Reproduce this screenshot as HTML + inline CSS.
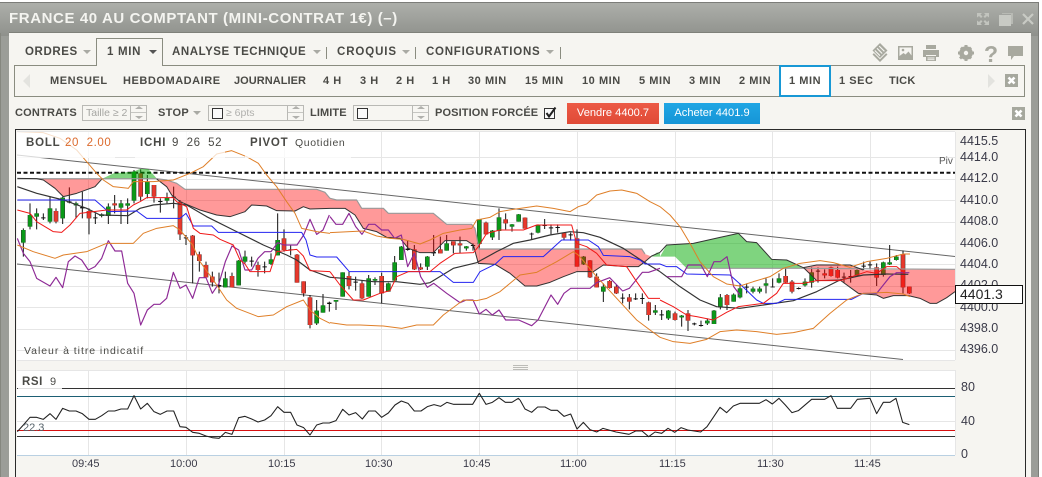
<!DOCTYPE html>
<html><head><meta charset="utf-8"><style>
html,body{margin:0;padding:0}
body{width:1042px;height:477px;overflow:hidden;position:relative;background:#fff;font-family:"Liberation Sans",sans-serif}
.a{position:absolute}
.t{position:absolute;white-space:nowrap;line-height:14px;font-weight:bold;font-size:11px;letter-spacing:.55px;color:#4a4a46}
.n{position:absolute;white-space:nowrap;line-height:14px;font-size:12.5px;color:#3a3a48}
.c{position:absolute;width:0;height:0;border-left:4px solid transparent;border-right:4px solid transparent;border-top:4px solid #a9aaa4}
.i{position:absolute;box-sizing:border-box;height:16px;border:1px solid #b9b9b5;background:#f7f6f2}
.s{position:absolute;top:0;bottom:0;right:0;width:15px;border-left:1px solid #b9b9b5}
.cb{position:absolute;box-sizing:border-box;width:11px;height:11px;border:1px solid #333;background:#fafafa}
</style></head><body>
<div class="a" style="left:0;top:2px;width:1039px;height:475px;background:linear-gradient(#adafaa 0,#8f918c 33px,#9b9d98 33px);border-top:1px solid #7c7d79;border-right:1px solid #7c7d79;box-sizing:border-box"></div>
<div class="a" style="left:0;top:33px;width:1px;height:444px;background:#85877f"></div>
<div class="t" style="left:9px;top:11px;font-size:15px;line-height:15px;letter-spacing:.6px;color:#f4f4f0">FRANCE 40 AU COMPTANT (MINI-CONTRAT 1€) (–)</div>
<svg class="a" style="left:974px;top:10px" width="62" height="18" fill="#c2c4be">
<path d="M3 3h5l-1.500 1.500 2 2-1.500 1.500-2-2L3 7.500zM15 3h-5l1.500 1.500-2 2 1.500 1.500 2-2L15 7.500zM3 15h5l-1.500-1.500 2-2-1.500-1.500-2 2L3 10.500zM15 15h-5l1.500-1.500-2-2 1.500-1.500 2 2L15 10.500z"/>
<path d="M28 3h11v11h-2V4H28z" fill="#b8bab4"/><rect x="25" y="5" width="12" height="11" fill="#c8cac4"/>
<path d="M49 4l10 10M59 4L49 14" stroke="#c8cac4" stroke-width="2.200" fill="none"/></svg>
<div class="a" style="left:9px;top:33px;width:1022px;height:444px;background:#f6f5f1;box-shadow:0 -1px 0 #7f817a"></div>

<div class="a" style="left:14px;top:65px;width:1011px;height:32px;box-sizing:border-box;border:1px solid #8a8c80"></div>
<div class="a" style="left:96px;top:38px;width:67px;height:28px;box-sizing:border-box;border:1px solid #8a8c80;border-bottom:none;background:#f6f5f1"></div>
<div class="t" style="left:25px;top:45px;font-size:11.500px;letter-spacing:.6px">ORDRES</div><div class="c" style="left:83px;top:50px"></div>
<div class="t" style="left:107px;top:45px;font-size:11.500px;letter-spacing:.7px">1 MIN</div><div class="c" style="left:149px;top:50px;border-top-color:#555"></div>
<div class="t" style="left:172px;top:45px;font-size:11.500px;letter-spacing:.55px">ANALYSE TECHNIQUE</div><div class="c" style="left:313px;top:50px"></div>
<div class="a" style="left:326px;top:47px;width:1px;height:12px;background:#8a8c80"></div>
<div class="t" style="left:337px;top:45px;font-size:11.500px;letter-spacing:.9px">CROQUIS</div><div class="c" style="left:402px;top:50px"></div>
<div class="a" style="left:415px;top:47px;width:1px;height:12px;background:#8a8c80"></div>
<div class="t" style="left:426px;top:45px;font-size:11.500px;letter-spacing:.75px">CONFIGURATIONS</div><div class="c" style="left:546px;top:50px"></div>
<div class="a" style="left:560px;top:47px;width:1px;height:12px;background:#8a8c80"></div>
<svg class="a" style="left:870px;top:42px" width="156" height="22" fill="#a8a99f">
<path d="M10 1l7.500 7.500L10 16 2.500 8.500z"/><path d="M4.800 8.500L10 13.700M7 6.300L12.200 11.500M9.200 4.100L14.400 9.300" stroke="#f6f5f1" stroke-width="1.100" fill="none"/><path d="M2.500 12.500l7.500 7.500 7.500-7.500-1.400-1.400L10 17.200 3.900 11.100z"/>
<path d="M28 4h15v14H28z"/><path d="M29.500 5.500h12v8l-3-4-3 3-2-1.500-4 3z" fill="#f6f5f1"/><circle cx="33" cy="8" r="1.300" fill="#a8a99f"/>
<path d="M56 3h10v4h-10zM53 8h16v7h-3v-2H56v2h-3zM56 14h10v5H56z"/><path d="M57.500 15.500h7v1h-7zM57.500 17.300h7v.8h-7z" fill="#f6f5f1"/>
<circle cx="96" cy="11" r="5" fill="none" stroke="#a8a99f" stroke-width="3.500"/><path d="M96 11m-1.500-8h3v16h-3zM88 9.500h16v3H88zM90 6.500l2-2 10 11-2 2zM100 4.500l2 2-11 11-2-2z"/><circle cx="96" cy="11" r="2.200" fill="#f6f5f1"/>
<text x="114" y="20" font-family="Liberation Sans" font-weight="bold" font-size="23" fill="#a8a99f">?</text>
<path d="M138 4h15v10h-9l-3 4v-4h-3z"/></svg>

<svg class="a" style="left:22px;top:73px" width="10" height="16"><path d="M8 1v14L1 8z" fill="#e3e3df"/></svg>
<svg class="a" style="left:986px;top:73px" width="10" height="16"><path d="M2 1v14l7-7z" fill="#e3e3df"/></svg>
<div class="a" style="left:779px;top:65px;width:52px;height:32px;box-sizing:border-box;border:2px solid #1898d5;background:#fff"></div>
<div class="t" style="left:50px;top:74px">MENSUEL</div>
<div class="t" style="left:123px;top:74px">HEBDOMADAIRE</div>
<div class="t" style="left:234px;top:74px;letter-spacing:.05px">JOURNALIER</div>
<div class="t" style="left:323px;top:74px">4 H</div><div class="t" style="left:360px;top:74px">3 H</div>
<div class="t" style="left:396px;top:74px">2 H</div><div class="t" style="left:432px;top:74px">1 H</div>
<div class="t" style="left:468px;top:74px">30 MIN</div><div class="t" style="left:525px;top:74px">15 MIN</div>
<div class="t" style="left:582px;top:74px">10 MIN</div><div class="t" style="left:639px;top:74px">5 MIN</div>
<div class="t" style="left:689px;top:74px">3 MIN</div><div class="t" style="left:739px;top:74px">2 MIN</div>
<div class="t" style="left:789px;top:74px">1 MIN</div><div class="t" style="left:839px;top:74px">1 SEC</div>
<div class="t" style="left:889px;top:74px;letter-spacing:.2px">TICK</div>
<svg class="a" style="left:1005px;top:74px" width="13" height="13"><rect width="13" height="13" fill="#a6a89e"/><path d="M3.500 3.500l6 6M9.500 3.500l-6 6" stroke="#fff" stroke-width="2.600"/></svg>
<svg class="a" style="left:1012px;top:107px" width="13" height="13"><rect width="13" height="13" fill="#a6a89e"/><path d="M3.500 3.500l6 6M9.500 3.500l-6 6" stroke="#fff" stroke-width="2.600"/></svg>

<div class="t" style="left:15px;top:106px;letter-spacing:.2px">CONTRATS</div>
<div class="i" style="left:82px;top:105px;width:65px"><div class="s"></div><span style="position:absolute;left:3px;top:0;font-size:10.500px;line-height:14px;color:#a5a5a2">Taille ≥ 2</span></div>
<div class="t" style="left:158px;top:106px;letter-spacing:.3px">STOP</div><div class="c" style="left:193px;top:111px"></div>
<div class="i" style="left:208px;top:105px;width:96px"><div class="s"></div><div class="cb" style="left:3px;top:2px"></div><span style="position:absolute;left:17px;top:0;font-size:10.500px;line-height:14px;color:#b0b0ad">≥ 6pts</span></div>
<div class="t" style="left:310px;top:106px;letter-spacing:.1px">LIMITE</div>
<div class="i" style="left:353px;top:105px;width:76px"><div class="s"></div><div class="cb" style="left:3px;top:2px"></div></div>
<svg class="a" style="left:0;top:105px" width="440" height="16" fill="#b0b0ac"><path d="M135 4l4-3 4 3zM135 11l4 3 4-3zM292 4l4-3 4 3zM292 11l4 3 4-3zM417 4l4-3 4 3zM417 11l4 3 4-3z"/><path d="M131 7.500h15M288 7.500h15M413 7.500h15" stroke="#c6c6c2"/></svg>
<div class="t" style="left:435px;top:106px;letter-spacing:.12px">POSITION FORCÉE</div>
<svg class="a" style="left:544px;top:106px" width="14" height="14"><rect x=".5" y="2.500" width="10" height="10" fill="#fafafa" stroke="#333"/><path d="M2.500 7l2.500 3.500L11.500 1.500" fill="none" stroke="#222" stroke-width="2"/></svg>
<div class="a" style="left:567px;top:103px;width:92px;height:21px;background:linear-gradient(#ec5a46,#e04a36);color:#fff;font-size:11.100px;line-height:21px;text-align:center">Vendre 4400.7</div>
<div class="a" style="left:664px;top:103px;width:96px;height:21px;background:linear-gradient(#20a6e4,#1695d6);color:#fff;font-size:11.100px;line-height:21px;text-align:center">Acheter 4401.9</div>

<div class="a" style="left:15px;top:129px;width:1011px;height:348px;box-sizing:border-box;border:1px solid #2a2a2a;border-top-width:1px;border-bottom:none;background:#f6f5f1"></div>

<svg class="a" style="left:0;top:0" width="1042" height="477">
<defs>
<clipPath id="cc"><rect x="17" y="132" width="938" height="228"/></clipPath>
<path id="g3" d="M70 300V338M90 255V290M110 250V260M150 235V275M188 203V265M228 220V226M305 253V258M325 230V258M363 220V233M383 220V227M402 125V212M442 155V192M501 203V212M676 445V472M716 392V466M735 380V395M813 388V402M833 330V376M950 542V580M969 526V548"/>
<path id="r3" d="M168 243V275M267 243V265M344 220V226M422 130V200M462 165V200M540 215V313M578 317V376M598 373V393M618 405V442M637 440V457M696 438V472M774 405V420M852 325V360M891 374V458M911 454V490M930 502V585"/>
<path id="g4" d="M18 510V515M38 427V500M116 445V500M135 447V452M175 460V485M194 397V452M214 350V390M292 380V410M350 340V362M409 349V355M448 268V342M487 302V322M507 262V303M546 283V290M566 253V275M624 285V308M761 380V403M820 470V485M976 541V548"/>
<path id="r4" d="M57 438V468M96 460V505M155 438V490M253 358V418M272 412V418M331 358V370M370 334V346M390 340V346M468 278V313M527 268V280M585 263V296M702 309V323M741 325V410M780 391V442M800 440V472M839 453V474M859 470V490M898 502V515M956 517V555"/>
<path id="g5" d="M25 542V565M65 557V562M142 572V580M162 542V582M181 502V532M221 494V515M240 475V502M279 476V485M299 476V485M318 460V467M357 445V458M435 455V466M455 427V458M591 420V436M670 397V435M689 397V403M709 380V390"/>
<path id="r5" d="M45 550V570M84 550V572M201 495V525M377 438V458M396 455V485M494 430V436M513 412V438M533 420V443M650 412V443M729 372V472M748 470V490"/>
</defs>
<rect x="17" y="132" width="938" height="228" fill="#fff"/>
<rect x="17" y="370" width="938" height="85" fill="#fff"/>
<path d="M17 131.500H955M17 157.500H955M17 179.500H955M17 200.500H955M17 222.500H955M17 243.500H955M17 264.500H955M17 286.500H955M17 307.500H955M17 329.500H955M17 350.500H955M17 360.500H955M17 370.500H955M17 421.500H955M88.500 132V360M186.500 132V360M284.500 132V360M381.500 132V360M479.500 132V360M577.500 132V360M675.500 132V360M772.500 132V360M870.500 132V360M88.500 370V455M186.500 370V455M284.500 370V455M381.500 370V455M479.500 370V455M577.500 370V455M675.500 370V455M772.500 370V455M870.500 370V455M955.500 132V360M955.500 370V455" stroke="#e6e6e6" fill="none"/>
<path d="M17 455.500H955" stroke="#b9d0e2"/>
<path d="M17 388.500H955" stroke="#333"/><path d="M17 396.500H955" stroke="#1d5f74"/><path d="M17 430.500H955" stroke="#d81010"/><path d="M17 436.500H955" stroke="#333"/>

<g clip-path="url(#cc)">
<path d="M17 155L955 256.500M17 264L903 359.500" stroke="#666" stroke-width="1" fill="none"/>
<path d="M17 172.700H955" stroke="#111" stroke-width="2" stroke-dasharray="4 2.500"/>

<g transform="translate(0,130) scale(.33333)" fill="none">
<path d="M70 295V380M90 220V298M110 235V298M130 250V270M150 200V280M168 235V280M188 200V282M208 172V220M228 215V265M247 185V265M267 235V313M286 250V282M305 250V262M325 220V282M344 195V250M363 210V282M383 205V282M402 120V220M422 118V212M442 135V205M462 165V218M481 205V248M501 188V220M521 170V235M540 210V330M558 315V345M578 315V460M598 365V425M618 395V442M637 425V470M657 428V490M676 425V472M696 428V472M716 390V466M735 362V400M755 380V410M774 395V440M794 395V430M813 370V405M833 250V376M852 298V365M872 345V376M891 372V458M911 454V500M930 495V595M950 510V585M969 492V548M988 515V545" stroke="#111" stroke-width="3"/>
<path d="M130 262V265M208 214V218M247 231V235M286 262V265M481 213V216M521 200V203M558 322V325M657 465V470M755 392V395M794 409V412M872 358V360M988 518V522" stroke="#111" stroke-width="13"/>
<use href="#g3" stroke="#333" stroke-width="14"/><use href="#r3" stroke="#333" stroke-width="14"/>
<use href="#g3" stroke="#0a9a18" stroke-width="11"/><use href="#r3" stroke="#e8382c" stroke-width="11"/>
</g>
<g transform="translate(330,130) scale(.33333)" fill="none">
<path d="M18 510V540M38 427V500M57 425V478M77 440V482M96 450V507M116 435V500M135 442V465M155 428V520M175 458V485M194 378V452M214 348V390M233 330V362M253 345V420M272 400V420M292 378V420M311 315V378M331 320V370M350 315V362M370 335V370M390 320V370M409 348V362M429 340V362M448 268V355M468 275V315M487 300V330M507 235V330M527 250V298M546 282V305M566 252V275M585 262V296M605 308V330M624 283V310M644 267V297M663 283V313M683 283V308M702 308V330M722 308V332M741 298V410M761 378V405M780 390V444M800 430V472M820 460V516M839 450V476M859 465V492M878 490V520M898 492V538M917 490V510M937 490V522M956 515V572M976 525V555" stroke="#111" stroke-width="3"/>
<path d="M77 455V458M233 356V360M311 366V370M429 345V348M605 311V313M644 285V288M663 292V295M683 291V294M722 313V316M878 503V506M917 505V508M937 504V507" stroke="#111" stroke-width="13"/>
<use href="#g4" stroke="#333" stroke-width="14"/><use href="#r4" stroke="#333" stroke-width="14"/>
<use href="#g4" stroke="#0a9a18" stroke-width="11"/><use href="#r4" stroke="#e8382c" stroke-width="11"/>
</g>
<g transform="translate(660,130) scale(.33333)" fill="none">
<path d="M5 540V570M25 540V570M45 545V572M65 555V590M84 540V603M103 578V586M123 572V590M142 565V585M162 540V582M181 492V538M201 492V540M221 490V515M240 460V505M260 460V490M279 470V490M299 470V490M318 445V490M338 445V472M357 430V460M377 412V460M396 450V490M416 472V478M435 445V470M455 412V473M474 412V458M494 418V445M513 410V440M533 410V445M552 428V458M572 420V458M591 418V438M611 395V420M630 395V418M650 400V468M670 395V440M689 345V405M709 375V392M729 362V490M748 470V492" stroke="#111" stroke-width="3"/>
<path d="M5 553V556M103 580V583M123 585V588M260 470V473M338 470V472M416 474V477M474 422V425M552 440V443M572 438V441M611 407V410M630 403V406" stroke="#111" stroke-width="13"/>
<use href="#g5" stroke="#333" stroke-width="14"/><use href="#r5" stroke="#333" stroke-width="14"/>
<use href="#g5" stroke="#0a9a18" stroke-width="11"/><use href="#r5" stroke="#e8382c" stroke-width="11"/>
</g>

<g transform="translate(0,130) scale(.33333)" stroke-linejoin="round">
<path d="M115 146L130 150 165 175 190 200 230 190 285 170 305 146z" fill="#ff0000" fill-opacity=".4"/>
<path d="M305 147L340 130 400 125 420 117 445 117 470 145z" fill="#00aa00" fill-opacity=".5"/>
<path d="M470 146L500 150 530 160 555 178 950 178 975 187 990 205 990 235 930 237 910 230 885 243 830 242 800 228 755 225 735 245 690 260 650 255 600 240 540 215 515 195 500 170z" fill="#ff0000" fill-opacity=".4"/>
</g>
<g transform="translate(330,130) scale(.33333)">
<path d="M0 205L20 210 80 210 95 235 160 235 175 250 310 250 350 283 425 283 435 295 447 357 935 358 945 372 965 380 945 395 925 410 890 410 820 405 790 425 740 425 700 440 660 457 620 468 585 468 540 430 495 403 445 400 430 345 410 332 345 332 310 368 270 368 235 355 210 325 170 322 140 305 100 295 75 255 45 235 0 235z" fill="#ff0000" fill-opacity=".4"/>
<path d="M965 380L980 368 990 367 990 380z" fill="#00aa00" fill-opacity=".5"/>
</g>
<g transform="translate(660,130) scale(.33333)">
<path d="M0 380L20 345 100 340 180 322 235 310 260 335 290 338 335 388 380 390 430 415 80 415 45 380z" fill="#00aa00" fill-opacity=".5"/>
<path d="M430 415L480 403 570 405 610 420 885 418 885 485 860 503 830 520 810 520 780 505 745 497 700 497 670 505 650 495 595 490 540 450 470 452z" fill="#ff0000" fill-opacity=".4"/>
</g>

<g fill="none" stroke-linejoin="round">
<g transform="translate(0,130) scale(.33333)">
<path d="M52 146H470L500 150 530 160 555 178H950L975 187 990 205" stroke="#999" stroke-width="3.500"/>
<path d="M52 145L110 146 130 150 165 175 190 200 230 190 285 170 305 148M470 147L500 170 515 195 540 215 600 240 650 255 690 260 735 245 755 225 800 228 830 242 885 243 910 230 930 237 990 235" stroke="#333" stroke-width="3"/>
<path d="M52 170L110 190 190 210 260 235 300 255 385 257 420 235 460 225 520 220 560 225 620 260 700 300 790 345 860 375 890 390 930 420 990 442" stroke="#333" stroke-width="3.500"/>
<path d="M52 325L70 370 90 395 110 445 150 468 168 442 188 473 205 395 225 378 245 390 265 420 285 410 305 385 325 332 345 363 365 363 383 460 402 490 422 585 442 540 462 523 480 523 500 505 520 427 540 475 558 465 578 505 598 443 618 443 637 490 657 460 676 395 696 348 716 360 735 420 755 420 774 385 794 365 813 365 833 338 852 345 891 345 911 315 930 268 950 313 969 300 988 255" stroke="#8e2a96" stroke-width="3.500"/>
<path d="M52 210H285L325 245 410 243 440 265H540L558 250 580 288H635L655 307H905L918 330 930 375 950 381H990" stroke="#2424f0" stroke-width="3"/>
<path d="M52 240L90 250 110 275 160 305 185 307 210 285 240 250 320 240H380L400 225 420 215 440 203H520L530 215 560 230 580 295 600 310 640 315 660 328 700 345 720 390 735 402 750 425H810L830 365 890 358 910 378 930 422 990 425" stroke="#f01818" stroke-width="3"/>
<path d="M50 5L130 8 180 25 230 60 260 95 290 130 310 150 340 170 385 175 400 155H460L520 150 570 130 610 110 650 72 695 62 740 80 775 100 800 135 830 170 860 215 885 250 905 295 950 305 990 310M52 345L100 365 165 385 190 375 260 365 320 340H400L430 310 470 295 520 287 540 300 578 345 600 395 640 450 680 510 710 535 775 560 820 555 860 530 910 510 930 540 960 565 990 580" stroke="#df7f28" stroke-width="3"/>
</g>
<g transform="translate(330,130) scale(.33333)">
<path d="M0 205L20 210H80L95 235H160L175 250H310L350 283H425L435 295 447 357H935L945 372M445 357" stroke="#999" stroke-width="3.500"/>
<path d="M0 235H45L75 255 100 295 140 305 170 322 210 325 235 355 270 368H310L345 332H410L430 345 445 400 495 403 540 430 585 468H620L660 457 700 440 740 425H790L820 405 890 410H925L945 395 965 378 990 367" stroke="#333" stroke-width="3"/>
<path d="M0 442L40 445 130 455H200L270 463 300 458 370 415 440 398 500 365 550 340 600 330 660 315 720 305 760 308 810 322 880 355 940 395 990 425" stroke="#333" stroke-width="3.500"/>
<path d="M0 260L18 283H38L57 250 77 290 96 313 116 283H135L155 300H175L194 325 214 315 233 410 253 370 272 440 292 472 311 460 350 490 390 518 409 510H429L448 552 468 538 487 555 507 540 527 570H566L605 587 624 570 663 495 683 523 702 490 722 475H780L800 458 839 443 878 483 898 475 937 427H956L990 415" stroke="#8e2a96" stroke-width="3.500"/>
<path d="M0 381H20L58 425H330L370 457H430L450 425 495 403 520 380H640L695 330H775L805 350 820 376 900 380 930 390 945 402H990" stroke="#2424f0" stroke-width="3"/>
<path d="M0 425L30 465 70 510H100L150 490 180 482 200 440 235 425H300L330 400 375 370 430 368 445 350 470 310 510 300H580L620 285H725L740 340 770 350 800 370 830 405 890 410 920 455 955 505H990" stroke="#f01818" stroke-width="3"/>
<path d="M0 308L60 305 100 303 140 318 180 325 220 328 270 342 300 330 340 310 390 300 425 295 440 270 480 262 510 245 550 238 620 228 670 235 720 245 745 230 770 222 800 195 840 183 875 180 920 190 960 215 990 230M0 578L50 585H90L160 588 215 595 260 585H310L340 555 400 510 440 512 470 505 510 485 570 435 620 427 680 395 730 365 745 375 775 410 800 440 860 505 920 570 960 600 990 622" stroke="#df7f28" stroke-width="3"/>
</g>
<g transform="translate(660,130) scale(.33333)">
<path d="M80 415H430L885 418" stroke="#999" stroke-width="3.500"/>
<path d="M0 367L20 345 100 340 180 322 235 310 260 335 290 338 335 388 380 390 430 413 470 405 570 405 610 420M430 412L470 452 540 450 595 490 650 495 670 505 700 497 745 497 780 505 810 520H830L860 503 885 485" stroke="#333" stroke-width="3"/>
<path d="M0 425L60 470 120 510 170 530 240 535 310 525 400 512 470 485 540 450 610 435 680 432 745 433" stroke="#333" stroke-width="3.500"/>
<path d="M0 402L20 410H50L80 432 210 435 240 462 290 510 310 520H350L375 508H575L610 490H650" stroke="#2424f0" stroke-width="3"/>
<path d="M20 440H65L84 405H123L142 440 162 395H181L201 380 221 470 240 495M650 490L670 465 690 440 710 428H748" stroke="#8e2a96" stroke-width="3.500"/>
<path d="M0 510L40 530 80 555 110 560 160 570 200 547 235 530 310 520 350 490 370 460H430L470 452H540L620 425 650 430 680 410H710L735 430" stroke="#f01818" stroke-width="3"/>
<path d="M0 230L30 255 60 290 90 340 120 395 160 440 200 462 240 468 280 455 330 440 370 415 420 400 480 392 520 398 570 412 620 395 680 385 730 372H750M0 622L40 635 90 640 140 628 180 605 230 600 290 605 350 613 400 608 460 595 510 550 560 510 610 490 680 487 730 492 750 500" stroke="#df7f28" stroke-width="3"/>
</g>
</g>
</g>

<g fill="none" stroke="#222" stroke-width="3.200" stroke-linejoin="round">
<path transform="translate(0,355) scale(.33333)" d="M52 230L70 210 90 187H110L130 193 150 176 168 193 188 160 208 168H228L247 176 267 193H286L305 182 325 168H344L363 162H383L402 122 422 162 442 145 462 170 481 178 501 168H521L540 215 558 217 578 232 598 235 618 243 637 248 657 250 676 232 696 238 716 188 735 184 755 192 774 201 794 195 813 182 833 155 852 172H872L891 210 911 218 930 240 950 210 969 204H988L1008 197 1028 163 1047 180 1067 173 1087 192 1106 168H1126L1145 187 1165 174 1185 150 1204 138 1224 145 1243 168H1263L1282 155 1302 149 1322 154 1341 142 1361 148H1418L1438 115 1458 148 1477 142 1497 128 1516 142H1536L1555 130 1560 135"/>
<path transform="translate(520,355) scale(.33333)" d="M0 135L15 162 35 172 53 156H75L93 166H112L132 184 152 177 171 222 190 202 210 224 230 231 249 220 288 231 327 238 347 228H366L386 245 405 231 425 235 444 220 464 232 483 218 503 225 542 231 561 215 580 187 600 157 620 173 640 153 660 145H718L738 134 757 147 777 130 796 150 816 173 835 167 875 133H914L933 122 952 160H992L1012 133 1050 130 1070 176 1090 142H1110L1128 130 1148 202 1168 209"/>
</g>
<path d="M513 365.500h15M513 367.500h15M513 369.500h15" stroke="#bcbcb7" fill="none"/>
</svg>

<div class="a" style="left:17px;top:132px;width:98px;height:26px;background:rgba(255,255,255,.75)"></div>
<div class="a" style="left:135px;top:132px;width:90px;height:26px;background:rgba(255,255,255,.75)"></div>
<div class="a" style="left:245px;top:132px;width:106px;height:26px;background:rgba(255,255,255,.75)"></div>
<div class="a" style="left:18px;top:372px;width:44px;height:19px;background:rgba(255,255,255,.85)"></div>
<div class="t" style="left:26px;top:136px;font-size:11.500px;letter-spacing:.8px">BOLL</div>
<div class="t" style="left:65px;top:136px;font-size:11.500px;letter-spacing:.6px;font-weight:normal;color:#dc6a2c">20&nbsp;&nbsp;2.00</div>
<div class="t" style="left:140px;top:136px;font-size:11.500px;letter-spacing:.8px">ICHI</div>
<div class="t" style="left:172px;top:136px;font-size:11.500px;letter-spacing:.6px;font-weight:normal">9&nbsp;&nbsp;26&nbsp;&nbsp;52</div>
<div class="t" style="left:250px;top:136px;font-size:11.500px;letter-spacing:.8px">PIVOT</div>
<div class="t" style="left:295px;top:136px;font-size:10.500px;letter-spacing:.6px;font-weight:normal">Quotidien</div>
<div class="t" style="left:24px;top:344px;font-size:10.500px;letter-spacing:.95px;font-weight:normal">Valeur à titre indicatif</div>
<div class="t" style="left:939px;top:155px;font-size:10px;letter-spacing:0;font-weight:normal;color:#555">Piv</div>
<div class="t" style="left:22px;top:375px;font-size:11.500px;letter-spacing:.6px">RSI</div>
<div class="t" style="left:50px;top:375px;font-size:11px;font-weight:normal">9</div>
<div class="t" style="left:23px;top:421px;font-size:11px;letter-spacing:0;font-weight:normal;color:#55626a">22.3</div>

<div class="n" style="left:960px;top:134px">4415.5</div>
<div class="n" style="left:960px;top:150px">4414.0</div>
<div class="n" style="left:960px;top:171px">4412.0</div>
<div class="n" style="left:960px;top:193px">4410.0</div>
<div class="n" style="left:960px;top:214px">4408.0</div>
<div class="n" style="left:960px;top:236px">4406.0</div>
<div class="n" style="left:960px;top:257px">4404.0</div>
<div class="n" style="left:960px;top:278px">4402.0</div>
<div class="n" style="left:960px;top:300px">4400.0</div>
<div class="n" style="left:960px;top:321px">4398.0</div>
<div class="n" style="left:960px;top:342px">4396.0</div>
<div class="a" style="left:955px;top:285px;width:68px;height:19px;box-sizing:border-box;border:1px solid #111;background:#fff;font-size:14px;line-height:17px;padding-left:4px;color:#222">4401.3</div>
<div class="n" style="left:961px;top:380px">80</div>
<div class="n" style="left:961px;top:414px">40</div>
<div class="n" style="left:961px;top:447px">0</div>
<div class="n" style="left:72px;top:457px;font-size:11px">09:45</div>
<div class="n" style="left:170px;top:457px;font-size:11px">10:00</div>
<div class="n" style="left:268px;top:457px;font-size:11px">10:15</div>
<div class="n" style="left:365px;top:457px;font-size:11px">10:30</div>
<div class="n" style="left:463px;top:457px;font-size:11px">10:45</div>
<div class="n" style="left:560px;top:457px;font-size:11px">11:00</div>
<div class="n" style="left:659px;top:457px;font-size:11px">11:15</div>
<div class="n" style="left:757px;top:457px;font-size:11px">11:30</div>
<div class="n" style="left:854px;top:457px;font-size:11px">11:45</div>
</body></html>
